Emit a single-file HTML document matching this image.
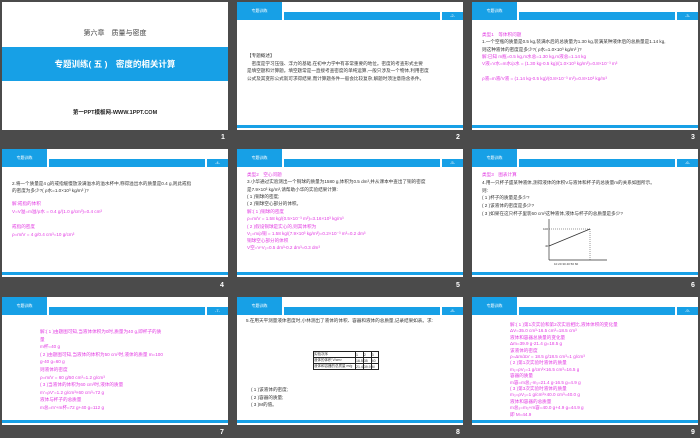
<!DOCTYPE html>
<html><head><meta charset="utf-8"><style>
*{margin:0;padding:0;box-sizing:border-box}
body{width:700px;height:438px;background:#4b4b4b;position:relative;overflow:hidden;font-family:"Liberation Sans","Noto Sans CJK SC",sans-serif}
.s{position:absolute;width:226px;height:128px;background:#fff;overflow:hidden}
.tab{position:absolute;left:0;top:0;width:45px;height:18px;background:#17a0e6;color:#fff;font-size:4px;line-height:18px;text-align:center}
.strip{position:absolute;left:47px;top:10px;width:156px;height:8px;background:#17a0e6}
.box{position:absolute;left:205px;top:10px;width:21px;height:8px;background:#17a0e6;color:#fff;font-size:4px;line-height:8px;text-align:center}
.bot{position:absolute;left:0;bottom:2px;width:226px;height:3px;background:#17a0e6}
.t{position:absolute;font-size:4.6px;line-height:7.3px;color:#333;white-space:nowrap}
.m{color:#e23ae2}
.n{position:absolute;color:#fff;font-size:7px;font-weight:bold}
</style></head><body>

<!-- slide 1 -->
<div class="s" style="left:2px;top:2px">
<div style="position:absolute;top:26px;width:226px;text-align:center;font-size:7px;color:#444">第六章　质量与密度</div>
<div style="position:absolute;top:45px;left:0;width:226px;height:34px;background:#17a0e6;color:#fff;font-weight:bold;font-size:8.5px;line-height:34px;text-align:center">专题训练( 五 )　密度的相关计算</div>
<div style="position:absolute;top:106px;width:226px;text-align:center;font-size:5.5px;font-weight:bold;color:#222">第一PPT模板网-WWW.1PPT.COM</div>
</div>
<div class="n" style="left:221px;top:134px">1</div>

<!-- slide 2 -->
<div class="s" style="left:237px;top:2px">
<div class="tab">专题训练</div><div class="strip"></div><div class="box">-2-</div><div class="bot"></div>
<div class="t" style="left:10px;top:50px;line-height:7.5px">【专题概述】<br>　密度是学习压强、浮力的基础,在初中力学中有非常重要的地位。密度的考查形式主要<br>是填空题和计算题。填空题常是一直接考查密度的单纯运算,一般只涉及一个物体,利用密度<br>公式及其变形公式就可求得结果,而计算题条件一般会比较复杂,解题时须注意隐含条件。</div>
</div>
<div class="n" style="left:456px;top:134px">2</div>

<!-- slide 3 -->
<div class="s" style="left:472px;top:2px">
<div class="tab">专题训练</div><div class="strip"></div><div class="box">-3-</div><div class="bot"></div>
<div class="t" style="left:10px;top:29px"><span class="m">类型1　等体积问题</span><br>1.一个空瓶的质量是0.5 kg,装满水后的总质量为1.30 kg,装满某种液体后的总质量是1.14 kg,<br>则这种液体的密度是多少?( ρ水=1.0×10³ kg/m³ )?<br><span class="m">解:已知 m瓶=0.5 kg,m水总=1.30 kg,m液总=1.14 kg<br>V液=V水=m水/ρ水 = (1.30 kg-0.5 kg)/(1.0×10³ kg/m³)=0.8×10⁻³ m³<br><br>ρ液=m液/V液 = (1.14 kg-0.5 kg)/(0.8×10⁻³ m³)=0.8×10³ kg/m³</span></div>
</div>
<div class="n" style="left:691px;top:134px">3</div>

<!-- slide 4 -->
<div class="s" style="left:2px;top:149px">
<div class="tab">专题训练</div><div class="strip"></div><div class="box">-4-</div><div class="bot"></div>
<div class="t" style="left:10px;top:31px">2.将一个质量是4 g的戒指缓慢放没满溢水的溢水杯中,称得溢出水的质量是0.4 g,则此戒指<br>的密度为多少?( ρ水=1.0×10³ kg/m³ )?</div>
<div class="t m" style="left:10px;top:51px;line-height:7.8px">解:戒指的体积<br>V=V溢=m溢/ρ水 = 0.4 g/(1.0 g/cm³)=0.4 cm³<br><br>戒指的密度<br>ρ=m/V = 4 g/0.4 cm³=10 g/cm³</div>
</div>
<div class="n" style="left:220px;top:282px">4</div>

<!-- slide 5 -->
<div class="s" style="left:237px;top:149px">
<div class="tab">专题训练</div><div class="strip"></div><div class="box">-5-</div><div class="bot"></div>
<div class="t" style="left:10px;top:22px"><span class="m">类型2　空心问题</span><br>3.小华通过实验测出一个铜球的质量为1580 g,体积为0.5 dm³,并从课本中查出了铜的密度<br>是7.9×10³ kg/m³,请帮助小华的实验结果计算:<br>( 1 )铜球的密度;<br>( 2 )铜球空心部分的体积。</div>
<div class="t m" style="left:10px;top:59px">解:( 1 )铜球的密度<br>ρ=m/V = 1.58 kg/(0.5×10⁻³ m³)=3.16×10³ kg/m³<br>( 2 )假设铜球是实心的,则其体积为<br>V₁=m/ρ铜 = 1.58 kg/(7.9×10³ kg/m³)=0.2×10⁻³ m³=0.2 dm³<br>铜球空心部分的体积<br>V空=V-V₁=0.5 dm³-0.2 dm³=0.3 dm³</div>
</div>
<div class="n" style="left:456px;top:282px">5</div>

<!-- slide 6 -->
<div class="s" style="left:472px;top:149px">
<div class="tab">专题训练</div><div class="strip"></div><div class="box">-6-</div><div class="bot"></div>
<div class="t" style="left:10px;top:22px;line-height:7.8px"><span class="m">类型3　图表计算</span><br>4.用一只杯子盛某种液体,测得液体的体积V与液体和杯子的总质量m的关系如图所示。<br>则:<br>( 1 )杯子的质量是多少?<br>( 2 )该液体的密度是多少?<br>( 3 )如果在这只杯子里装60 cm³这种液体,液体与杯子的总质量是多少?</div>
<svg style="position:absolute;left:70px;top:68px" width="90" height="50">
<line x1="7" y1="2" x2="7" y2="43" stroke="#333" stroke-width=".7"/>
<line x1="7" y1="43" x2="65" y2="43" stroke="#333" stroke-width=".7"/>
<line x1="7" y1="29" x2="48" y2="12" stroke="#333" stroke-width=".8"/>
<line x1="7" y1="12" x2="48" y2="12" stroke="#333" stroke-width=".5" stroke-dasharray="1,1"/>
<line x1="48" y1="12" x2="48" y2="43" stroke="#333" stroke-width=".5" stroke-dasharray="1,1"/>
<text x="1" y="13" font-size="3" fill="#333">100</text>
<text x="3" y="30" font-size="3" fill="#333">40</text>
<text x="12" y="48" font-size="3" fill="#333">10  20  30  40  50  60</text>
</svg>
</div>
<div class="n" style="left:691px;top:282px">6</div>

<!-- slide 7 -->
<div class="s" style="left:2px;top:297px">
<div class="tab">专题训练</div><div class="strip"></div><div class="box">-7-</div><div class="bot"></div>
<div class="t m" style="left:38px;top:31px;line-height:7.6px">解:( 1 )由题图可知,当液体体积为0时,质量为40 g,即杯子的质<br>量<br>m杯=40 g<br>( 2 )由题图可知,当液体的体积为50 cm³时,液体的质量 m=100<br>g-40 g=60 g<br>则液体的密度<br>ρ=m/V = 60 g/50 cm³=1.2 g/cm³<br>( 3 )当液体的体积为60 cm³时,液体的质量<br>m'=ρV'=1.2 g/cm³×60 cm³=72 g<br>液体与杯子的总质量<br>m总=m'+m杯=72 g+40 g=112 g</div>
</div>
<div class="n" style="left:220px;top:429px">7</div>

<!-- slide 8 -->
<div class="s" style="left:237px;top:297px">
<div class="tab">专题训练</div><div class="strip"></div><div class="box">-8-</div><div class="bot"></div>
<div class="t" style="left:9px;top:20px">5.在用天平测量液体密度时,小林测出了液体的体积、容器和液体的总质量,记录结果如表。求:</div>
<table style="position:absolute;left:76px;top:54px;border-collapse:collapse;font-size:3.5px;color:#333">
<tr><td style="border:.6px solid #222;width:42px;height:6px">实验次序</td><td style="border:.6px solid #222;width:7px">1</td><td style="border:.6px solid #222;width:7px">2</td><td style="border:.6px solid #222;width:7px">3</td></tr>
<tr><td style="border:.6px solid #222;height:6px">液体的体积 V/cm³</td><td style="border:.6px solid #222">16.5</td><td style="border:.6px solid #222">35</td><td style="border:.6px solid #222">40</td></tr>
<tr><td style="border:.6px solid #222;height:6px">液体和容器的总质量 m/g</td><td style="border:.6px solid #222">21.4</td><td style="border:.6px solid #222">39.9</td><td style="border:.6px solid #222">M</td></tr>
</table>
<div class="t" style="left:14px;top:89px;line-height:7.6px">( 1 )该液体的密度;<br>( 2 )容器的质量;<br>( 3 )M的值。</div>
</div>
<div class="n" style="left:456px;top:429px">8</div>

<!-- slide 9 -->
<div class="s" style="left:472px;top:297px">
<div class="tab">专题训练</div><div class="strip"></div><div class="box">-9-</div><div class="bot"></div>
<div class="t m" style="left:38px;top:25px;line-height:6.4px">解:( 1 )第1次实验和第2次实验相比,液体体积的变化量<br>ΔV=35.0 cm³-16.5 cm³=18.5 cm³<br>液体和容器总质量的变化量<br>Δm=39.9 g-21.4 g=18.5 g<br>该液体的密度<br>ρ=Δm/ΔV = 18.5 g/18.5 cm³=1 g/cm³<br>( 2 )第1次实验时液体的质量<br>m₁=ρV₁=1 g/cm³×16.5 cm³=16.5 g<br>容器的质量<br>m容=m总₁-m₁=21.4 g-16.5 g=4.9 g<br>( 3 )第3次实验时液体的质量<br>m₃=ρV₃=1 g/cm³×40.0 cm³=40.0 g<br>液体和容器的总质量<br>m总₃=m₃+m容=40.0 g+4.9 g=44.9 g<br>即 M=44.9</div>
</div>
<div class="n" style="left:691px;top:429px">9</div>
</body></html>
